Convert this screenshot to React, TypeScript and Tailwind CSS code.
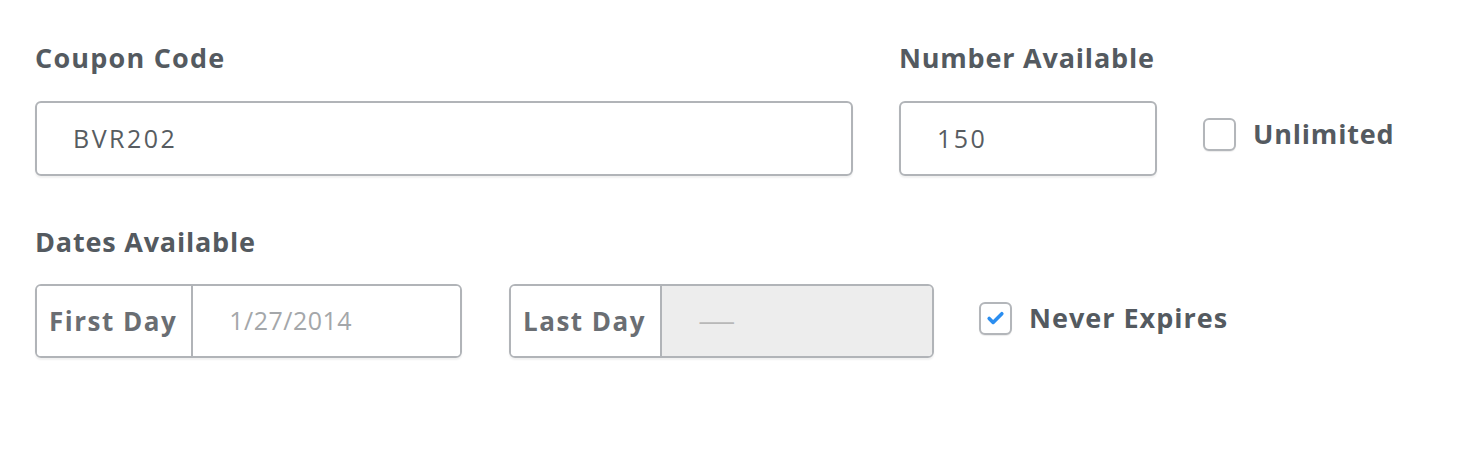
import { Check } from "lucide-react";

const font = { fontFamily: "'Open Sans', Lato, sans-serif" };

function Checkbox({ checked }: { checked?: boolean }) {
  return (
    <span className="flex h-[33px] w-[33px] items-center justify-center rounded-[6px] border-2 border-[#b3b6ba] bg-white shadow-[0_1px_1px_rgba(0,0,0,0.08)]">
      {checked && <Check className="h-[19px] w-[19px] text-[#2b8ef0]" strokeWidth={4.5} />}
    </span>
  );
}

function DateBox({ label, value, disabled }: { label: string; value: string; disabled?: boolean }) {
  return (
    <div className="flex h-[74px] overflow-hidden rounded-[6px] border-2 border-[#b1b4b8] shadow-[0_2px_2px_rgba(0,0,0,0.06)]">
      <div className="flex items-center border-r-2 border-[#b1b4b8] bg-white pl-[12px] pr-[14px] text-[26px] font-bold tracking-[1.5px] text-[#6a6e73]">
        {label}
      </div>
      <div
        className={
          "flex flex-1 items-center pl-[36px] text-[25px] tracking-[0.5px] " +
          (disabled ? "bg-[#ededed] text-[#b8b8b8]" : "bg-white text-[#a4a7aa]")
        }
      >
        {disabled ? <span className="inline-block origin-left scale-x-150">{value}</span> : value}
      </div>
    </div>
  );
}

export default function App() {
  return (
    <div className="min-h-screen bg-white pl-[35px] pt-[38px] text-[#545a60]" style={font}>
      <div className="flex">
        <div className="w-[818px]">
          <div className="h-[40px] text-[27px] font-bold leading-[40px] tracking-[1.2px]">Coupon Code</div>
          <div className="mt-[23px] flex h-[75px] items-center rounded-[6px] border-2 border-[#b1b4b8] pl-[36px] text-[25px] tracking-[2.5px] text-[#575c61] shadow-[0_2px_2px_rgba(0,0,0,0.06)]">
            BVR202
          </div>
        </div>
        <div className="ml-[46px] w-[258px]">
          <div className="h-[40px] whitespace-nowrap text-[27px] font-bold leading-[40px] tracking-[0.8px]">Number Available</div>
          <div className="mt-[23px] flex h-[75px] items-center rounded-[6px] border-2 border-[#b1b4b8] pl-[36px] text-[25px] tracking-[2.5px] text-[#575c61] shadow-[0_2px_2px_rgba(0,0,0,0.06)]">
            150
          </div>
        </div>
        <div className="ml-[46px] mt-[80px] flex h-[33px] items-center gap-[17px]">
          <Checkbox />
          <span className="text-[27px] font-bold tracking-[0.8px]">Unlimited</span>
        </div>
      </div>

      <div className="mt-[46px] h-[40px] text-[27px] font-bold leading-[40px] tracking-[0.8px]">Dates Available</div>
      <div className="mt-[22px] flex items-center">
        <div className="w-[427px]">
          <DateBox label="First Day" value="1/27/2014" />
        </div>
        <div className="ml-[47px] w-[425px]">
          <DateBox label="Last Day" value="—" disabled />
        </div>
        <div className="mb-[6px] ml-[45px] flex items-center gap-[17px]">
          <Checkbox checked />
          <span className="text-[27px] font-bold tracking-[1px]">Never Expires</span>
        </div>
      </div>
    </div>
  );
}
